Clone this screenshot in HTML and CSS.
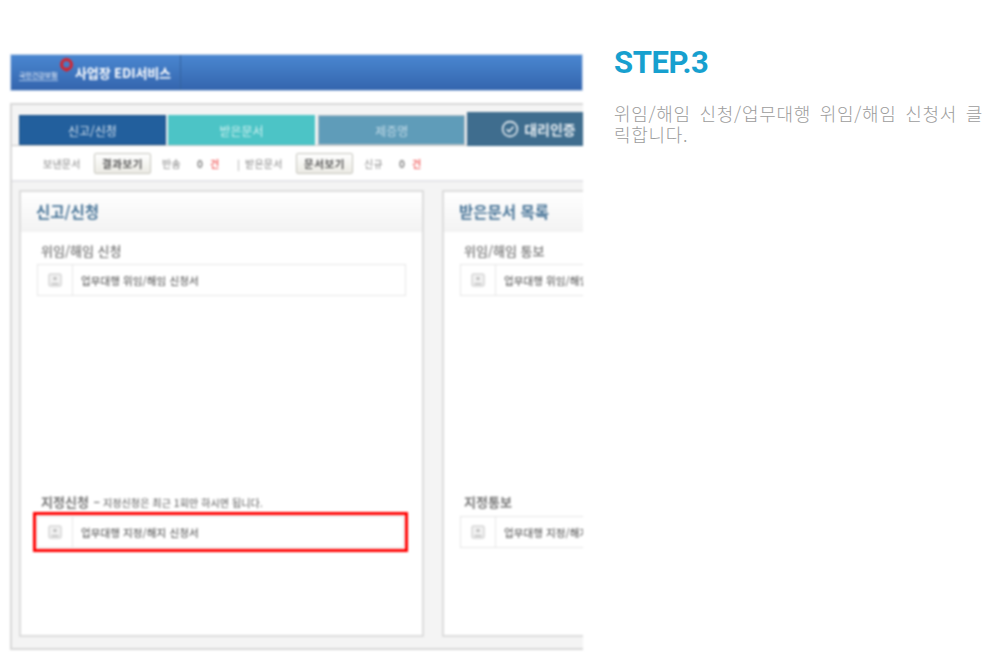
FILE: index.html
```html
<!DOCTYPE html>
<html lang="ko">
<head>
<meta charset="utf-8">
<title>STEP.3</title>
<link rel="stylesheet" href="styles.css">
</head>
<body>
<main class="page">
  <section class="shot">
    <header class="topbar">
      <div class="brand">
        <span class="logo">
          <span class="logo-text">국민건강보험</span>
          <svg class="pin" viewBox="0 0 14 14" width="15" height="15"><circle cx="7" cy="6" r="4.6" fill="none" stroke="#d8232a" stroke-width="2.8"/><path d="M4 10l3 3 3-3z" fill="#d8232a"/></svg>
        </span>
        <span class="brand-name">사업장 EDI서비스</span>
      </div>
    </header>
    <div class="panel">
      <nav class="tabs">
        <span class="tab tab-a">신고/신청</span>
        <span class="tab tab-b">받은문서</span>
        <span class="tab tab-c">제증명</span>
        <span class="tab tab-d">
          <svg viewBox="0 0 18 18" width="18" height="18"><circle cx="9" cy="9" r="7.4" fill="none" stroke="#e6edf2" stroke-width="1.6"/><path d="M5.6 9.2l2.4 2.4 4.5-4.8" fill="none" stroke="#e6edf2" stroke-width="1.6"/></svg>
          대리인증
        </span>
      </nav>
      <div class="status">
        <span class="s-label">보낸문서</span>
        <span class="s-btn">결과보기</span>
        <span class="s-label s-gap">반송</span>
        <span class="s-num">0</span>
        <span class="s-unit">건</span>
        <span class="s-sep">|</span>
        <span class="s-label">받은문서</span>
        <span class="s-btn">문서보기</span>
        <span class="s-label s-gap">신규</span>
        <span class="s-num">0</span>
        <span class="s-unit">건</span>
      </div>
      <div class="cards">
        <article class="card">
          <h2 class="card-title">신고/신청</h2>
          <div class="card-body">
            <h3 class="group">위임/해임 신청</h3>
            <div class="row">
              <span class="row-icon"><svg viewBox="0 0 14 14" width="14" height="14"><rect x="1" y="1" width="12" height="12" rx="1" fill="#f2f2f2" stroke="#c4c4c4"/><circle cx="7" cy="5.6" r="1.8" fill="#bdbdbd"/><path d="M3.5 10.8h7" stroke="#b5b5b5" stroke-width="1.3"/></svg></span>
              <span class="row-text">업무대행 위임/해임 신청서</span>
            </div>
            <h3 class="group group-low">지정신청 <span class="note"><b>–</b> 지정신청은 최근 1회만 하시면 됩니다.</span></h3>
            <div class="row row-marked">
              <span class="row-icon"><svg viewBox="0 0 14 14" width="14" height="14"><rect x="1" y="1" width="12" height="12" rx="1" fill="#f2f2f2" stroke="#c4c4c4"/><circle cx="7" cy="5.6" r="1.8" fill="#bdbdbd"/><path d="M3.5 10.8h7" stroke="#b5b5b5" stroke-width="1.3"/></svg></span>
              <span class="row-text">업무대행 지정/해지 신청서</span>
            </div>
          </div>
        </article>
        <article class="card card-right">
          <h2 class="card-title">받은문서 목록</h2>
          <div class="card-body card-body-right">
            <h3 class="group">위임/해임 통보</h3>
            <div class="row row-cut">
              <span class="row-icon"><svg viewBox="0 0 14 14" width="14" height="14"><rect x="1" y="1" width="12" height="12" rx="1" fill="#f2f2f2" stroke="#c4c4c4"/><circle cx="7" cy="5.6" r="1.8" fill="#bdbdbd"/><path d="M3.5 10.8h7" stroke="#b5b5b5" stroke-width="1.3"/></svg></span>
              <span class="row-text">업무대행 위임/해임 통보서</span>
            </div>
            <h3 class="group group-low">지정통보</h3>
            <div class="row row-cut">
              <span class="row-icon"><svg viewBox="0 0 14 14" width="14" height="14"><rect x="1" y="1" width="12" height="12" rx="1" fill="#f2f2f2" stroke="#c4c4c4"/><circle cx="7" cy="5.6" r="1.8" fill="#bdbdbd"/><path d="M3.5 10.8h7" stroke="#b5b5b5" stroke-width="1.3"/></svg></span>
              <span class="row-text">업무대행 지정/해지 통보서</span>
            </div>
          </div>
        </article>
      </div>
    </div>
  </section>
  <section class="step">
    <h1 class="step-title">STEP.3</h1>
    <p class="step-text">위임/해임 신청/업무대행 위임/해임 신청서 클릭합니다.</p>
  </section>
</main>
</body>
</html>
```
FILE: styles.css
```css
* { box-sizing: border-box; }
html, body { margin: 0; padding: 0; background: #fff; }
body { font-family: "Noto Sans CJK KR", "Liberation Sans", sans-serif; height: 671px; overflow: hidden; }
.page { display: flex; align-items: flex-start; }

.shot { width: 573px; margin: 54px 0 0 10px; height: 598px; overflow: hidden; flex: none; filter: blur(0.8px); }

.topbar { height: 37px; background: linear-gradient(#4a87d1, #3465ae); border: 1px solid #c9d8ec; border-bottom-color: #bcd0ea; display: flex; }
.brand { width: 170px; border-right: 1px solid #34639f; display: flex; align-items: center; padding-left: 8px; }
.logo { display: flex; align-items: flex-start; width: 56px; flex: none; }
.logo-text { font-size: 7px; color: #fff; white-space: nowrap; padding-top: 5px; line-height: 10px; border-bottom: 1px solid #a9c4e6; }
.pin { flex: none; margin: -7px 0 0 1px; }
.brand-name { color: #fff; font-size: 13px; font-weight: 700; white-space: nowrap; letter-spacing: -.1px; }

.panel { margin-top: 12px; height: 547px; background: #f4f4f4; border: 2px solid #d8d8d8; border-right: 0; }
.tabs { display: flex; align-items: flex-end; height: 41px; padding-left: 7px; gap: 2px; border-bottom: 1px solid #c8c8c8; }
.tab { height: 30px; width: 147px; display: flex; align-items: center; justify-content: center; font-size: 12px; color: #dbe7ee; }
.tab-a { background: #225f9d; border: 1px solid #1c5288; color: #d5e2ee; }
.tab-b { background: #4cc4c6; color: #d6f2f2; width: 148px; }
.tab-c { background: #5f9cb9; border: 1px solid #aebcc5; color: #c4dce8; margin-left: 1px; }
.tab-d { background: #3f6d8e; width: 116px; height: 34px; color: #e6edf2; font-size: 14px; font-weight: 700; gap: 5px; margin-bottom: -1px; justify-content: flex-start; padding-left: 34px; }

.status { height: 36px; background: #fff; border-bottom: 2px solid #e4e4e8; display: flex; align-items: center; padding: 1px 0 0 31px; font-size: 10px; color: #888; white-space: nowrap; }
.s-label { width: 42px; letter-spacing: .2px; }
.s-gap { width: 21px; margin-left: 11px; }
.s-btn { width: 57px; height: 21px; margin-left: 9px; border: 1px solid #c4c4bc; border-radius: 2px; background: linear-gradient(#fff, #ecebe4); color: #555; font-weight: 700; font-size: 10.5px; display: flex; align-items: center; justify-content: center; letter-spacing: .6px; }
.s-num { margin-left: 14px; width: 7px; font-weight: 700; color: #808080; }
.s-unit { margin-left: 6px; width: 9px; color: #f26a6a; font-weight: 700; }
.s-sep { margin-left: 18px; width: 8px; color: #999; }

.cards { display: flex; gap: 18px; padding: 8px 0 0 7px; }
.card { width: 405px; height: 447px; flex: none; background: #fff; border: 2px solid #dcdcdc; }
.card-right { width: 160px; border-right: 0; }
.card-title { margin: 0; height: 40px; padding-left: 15px; font-size: 15.5px; line-height: 38px; font-weight: 700; color: #4a7699; background: linear-gradient(#fff, #f3f3f3); white-space: nowrap; }
.card-body { padding: 9px 16px 0 16px; }
.card-body-right { padding-right: 0; }
.group { margin: 0 0 3px; padding-left: 4px; height: 20px; line-height: 20px; font-size: 13px; font-weight: 500; color: #777; white-space: nowrap; }
.group-low { margin: 196px 0 4px; font-weight: 700; }
.note { font-size: 10px; font-weight: 500; color: #777; margin-left: 1px; letter-spacing: .1px; }
.note b { font-weight: 700; font-size: 12px; }

.row { height: 32px; border: 1.5px solid #e6e6e6; background: #fff; display: flex; align-items: center; width: 369px; }
.row-cut { width: 200px; }
.row-marked { outline: 3px solid #ff0000; outline-offset: 1px; width: 367px; }
.row-icon { width: 35px; height: 100%; flex: none; display: flex; align-items: center; justify-content: center; border-right: 1.5px solid #e6e6e6; }
.row-text { margin-left: 8px; font-size: 10.5px; font-weight: 500; color: #6a6a6a; white-space: nowrap; letter-spacing: .1px; }

.step { width: 374px; margin: 43px 0 0 31px; flex: none; }
.step-title { margin: 0; font-family: Roboto, "Liberation Sans", sans-serif; font-size: 31px; line-height: 40px; font-weight: 700; color: #17a0cf; letter-spacing: -.4px; }
.step-text { margin: 20px 0 0; font-size: 18px; font-weight: 300; line-height: 21px; color: #9c9c9c; word-break: break-all; letter-spacing: .7px; word-spacing: 3px; }
```
